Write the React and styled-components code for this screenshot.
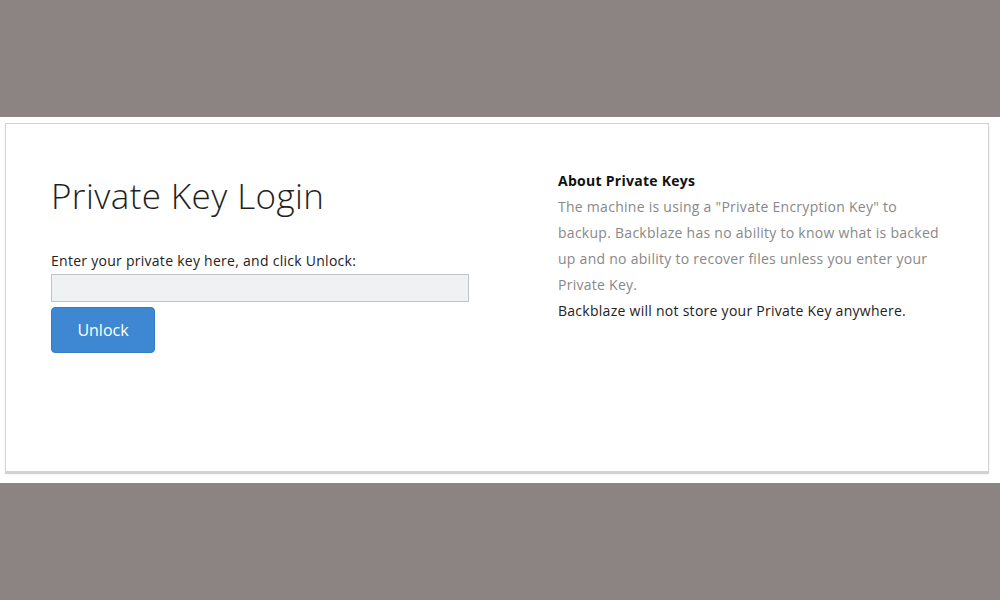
import React from "react";
import styled, { createGlobalStyle } from "styled-components";

const Global = createGlobalStyle`
  html, body { margin: 0; padding: 0; }
  body {
    background: #8c8482;
    font-family: "Open Sans", "Liberation Sans", sans-serif;
    height: 600px;
    overflow: hidden;
  }
`;

const Band = styled.div`
  margin-top: 117px;
  height: 366px;
  background: #ffffff;
  padding: 6px 11px 0 5px;
  box-sizing: border-box;
`;

const Card = styled.div`
  height: 349px;
  box-sizing: border-box;
  border: 1px solid #d2d2d2;
  box-shadow: 0 2px 1px rgba(0, 0, 0, 0.18);
  display: grid;
  grid-template-columns: 418px 386px;
  column-gap: 89px;
  padding: 0 0 0 45px;
`;

const LeftCol = styled.div`
  display: flex;
  flex-direction: column;
  padding-top: 49px;
`;

const Title = styled.h1`
  margin: 0;
  font-size: 35px;
  font-weight: 300;
  letter-spacing: 0.4px;
  line-height: 46px;
  color: #1f1f1f;
`;

const Label = styled.label`
  margin-top: 32px;
  font-size: 14px;
  letter-spacing: 0.27px;
  line-height: 20px;
  color: #222;
`;

const KeyInput = styled.input`
  margin-top: 3px;
  width: 418px;
  height: 28px;
  box-sizing: border-box;
  background: #eff2f2;
  border: 1px solid #bfc2c4;
  border-radius: 0;
  outline: none;
  padding: 0 6px;
  font-family: inherit;
  font-size: 14px;
`;

const UnlockButton = styled.button`
  margin-top: 5px;
  width: 104px;
  height: 46px;
  background: #3e88d3;
  color: #ffffff;
  border: 1px solid #357dc4;
  border-radius: 4px;
  font-family: inherit;
  font-size: 16px;
  cursor: pointer;
  padding: 0;
`;

const RightCol = styled.div`
  padding-top: 44px;
  font-size: 14px;
  letter-spacing: 0.27px;
  line-height: 26px;
`;

const Heading = styled.div`
  font-weight: 700;
  color: #111;
`;

const Para = styled.p`
  margin: 0;
  color: ${(p) => (p.$muted ? "#888888" : "#222222")};
`;

export default function App() {
  return (
    <>
      <Global />
      <Band>
        <Card>
          <LeftCol>
            <Title>Private Key Login</Title>
            <Label htmlFor="pk">Enter your private key here, and click Unlock:</Label>
            <KeyInput id="pk" type="password" />
            <div>
              <UnlockButton>Unlock</UnlockButton>
            </div>
          </LeftCol>
          <RightCol>
            <Heading>About Private Keys</Heading>
            <Para $muted>
              The machine is using a "Private Encryption Key" to backup. Backblaze has no ability to know what is backed up and no ability to recover files unless you enter your Private Key.
            </Para>
            <Para>Backblaze will not store your Private Key anywhere.</Para>
          </RightCol>
        </Card>
      </Band>
    </>
  );
}
